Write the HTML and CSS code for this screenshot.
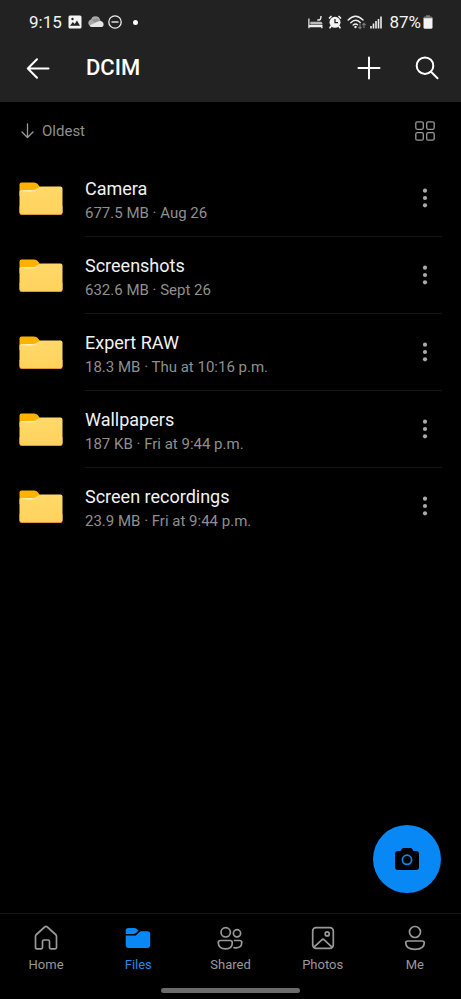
FILE: index.html
```html
<!DOCTYPE html>
<html lang="en">
<head>
<meta charset="utf-8">
<meta name="viewport" content="width=device-width, initial-scale=1">
<title>DCIM</title>
<link rel="stylesheet" href="styles.css">
</head>
<body>
<svg class="defs" aria-hidden="true">
  <defs>
    <linearGradient id="folder-front" x1="0" y1="0" x2="0" y2="1">
      <stop offset="0" stop-color="#ffd96a"/>
      <stop offset="1" stop-color="#ffd25c"/>
    </linearGradient>
    <linearGradient id="folder-shine" gradientUnits="userSpaceOnUse" x1="2" y1="0" x2="19" y2="0">
      <stop offset="0" stop-color="#ffe48c"/>
      <stop offset=".5" stop-color="#fff3bd"/>
      <stop offset="1" stop-color="#ffdf7c"/>
    </linearGradient>
  </defs>
  <symbol id="folder" viewBox="0 0 44 34">
    <path fill="#ffb300" d="M2.500 .5H15Q17.500 .5 18.700 2L21 5V14H.5V2.500Q.5 .5 2.500 .5Z"/>
    <path fill="#e0963a" d="M.5 24H43.500V31Q43.500 33 41.500 33H2.500Q.5 33 .5 31Z"/>
    <path fill="url(#folder-front)" d="M.5 9.500Q.5 8 2.500 8H14.500Q16.500 8 17.800 6.800L19.500 5.400Q20.500 4.600 22 4.600H41.500Q43.500 4.600 43.500 6.600V30Q43.500 32 41.500 32H2.500Q.5 32 .5 30Z"/>
    <path fill="none" stroke="url(#folder-shine)" stroke-width="1.600" stroke-linecap="round" d="M2.500 8.800H14.500Q17 8.800 18.500 7.300"/>
  </symbol>
  <symbol id="more" viewBox="0 0 24 24">
    <circle cx="12" cy="4.700" r="2.100"/><circle cx="12" cy="12" r="2.100"/><circle cx="12" cy="19.300" r="2.100"/>
  </symbol>
</svg>

<div class="app">
  <header class="header">
    <div class="status">
      <div class="status-group status-left">
        <span class="clock">9:15</span>
        <svg width="14" height="14" viewBox="0 0 14 14" aria-hidden="true"><path fill="#f4f4f4" fill-rule="evenodd" d="M2 .5H12Q13.500 .5 13.500 2V12Q13.500 13.500 12 13.500H2Q.5 13.500 .5 12V2Q.5 .5 2 .5ZM2 10.800H12L9 5.500L6.700 9L4.800 7ZM4.500 2.800A1.200 1.200 0 1 0 4.500 5.200A1.200 1.200 0 1 0 4.500 2.800Z"/></svg>
        <svg width="16" height="12" viewBox="0 0 16 12" aria-hidden="true"><path fill="#aaa" d="M1 9A3.400 3.400 0 0 1 3 3.600A4.700 4.700 0 0 1 12 3.500L13 6L4 11Z"/><path fill="#929292" d="M3.500 4L9 2.300L13 5.500L9 8Z"/><path fill="#e6e6e6" d="M1.500 9.500L9.800 5.600Q14 4 15.300 7Q16.500 11 12.500 11H4Q2.200 11 1.500 9.500Z"/></svg>
        <svg class="dnd" width="14" height="14" viewBox="0 0 14 14" aria-hidden="true"><circle cx="7" cy="7" r="6.200" fill="none" stroke="#eee" stroke-width="1.300"/><path stroke="#eee" stroke-width="1.400" d="M3.500 7H10.500"/></svg>
        <span class="dot"></span>
      </div>
      <div class="status-group status-right">
        <svg width="15" height="14" viewBox="0 0 15 14" aria-hidden="true"><path fill="#eee" d="M.3 3.500H1.500V10H14.500V13.300H13.200V12.200H1.500V13.300H.3Z"/><path fill="#bbb" d="M2.300 6.700H12.700Q14.300 6.700 14.300 8.300V9.500H2.300Z"/><path fill="none" stroke="#eee" stroke-width="1.400" d="M9.300 5H11Q13 5 13 1"/></svg>
        <svg width="14" height="14" viewBox="0 0 14 14" aria-hidden="true"><circle cx="7" cy="7.300" r="5.500" fill="#f4f4f4"/><path stroke="#f4f4f4" stroke-width="1.700" stroke-linecap="round" d="M1.500 3L3 1.500M12.500 3L11 1.500M2.800 11.500L2 12.700M11.200 11.500L12 12.700"/><path stroke="#222" stroke-width="1.300" fill="none" d="M7 4V7.700H10"/></svg>
        <svg class="wifi" width="20" height="15" viewBox="0 0 20 15" aria-hidden="true"><g fill="none" stroke="#eee" stroke-width="1.500" stroke-linecap="round"><path d="M1.200 5Q8.500-2.500 16 5M3.800 7.700Q8.500 3 13.200 7.500M6.200 10Q8.500 8 10.500 9.700"/></g><circle cx="8.500" cy="12" r="1.200" fill="#eee"/><path fill="none" stroke="#777" stroke-width="1.200" d="M13 8.500V13.500M11.300 12L13 13.700L14.500 12M17 13V8.500M15.400 10L17 8.300L18.600 10"/></svg>
        <svg width="12" height="13" viewBox="0 0 12 13" aria-hidden="true"><path stroke="#eee" stroke-width="1.600" d="M1 10V12.500M3.500 7.500V12.500M6 5V12.500M8.500 3V12.500M11 .5V12.500"/></svg>
        <span class="battery-text">87%</span>
        <svg width="10" height="14" viewBox="0 0 10 14" aria-hidden="true"><path fill="#777" d="M3 .3H7V1.500H8.500Q9.500 1.500 9.500 3V4H.5V3Q.5 1.500 1.500 1.500H3Z"/><path fill="#f3f3f3" d="M.5 3.300H9.500V12.200Q9.500 13.700 8 13.700H2Q.5 13.700 .5 12.200Z"/></svg>
      </div>
    </div>
    <div class="toolbar">
      <button class="icon-button" aria-label="Back"><svg width="24" height="24" viewBox="0 0 24 24"><path d="M22.500 12.500H1.800M11 3.200L1.800 12.500L11 21.700"/></svg></button>
      <h1 class="title">DCIM</h1>
      <button class="icon-button" aria-label="Add"><svg width="24" height="24" viewBox="0 0 24 24"><path d="M12 1.500V22.500M1.500 12H22.500"/></svg></button>
      <button class="icon-button" aria-label="Search"><svg width="24" height="24" viewBox="0 0 24 24"><circle cx="10" cy="9.700" r="8.300"/><path d="M16 15.700L22.500 22.200"/></svg></button>
    </div>
  </header>

  <main class="content">
    <div class="sort-row">
      <button class="sort"><svg width="14" height="16" viewBox="0 0 14 16" aria-hidden="true"><path d="M7.500 1V14.500M2 9L7.500 14.500L13 9"/></svg>Oldest</button>
      <button class="grid-toggle" aria-label="Grid view"><svg width="20" height="20" viewBox="0 0 20 20"><rect x=".8" y=".8" width="7.500" height="7.500" rx="1.500"/><rect x="11.700" y=".8" width="7.500" height="7.500" rx="1.500"/><rect x=".8" y="11.700" width="7.500" height="7.500" rx="1.500"/><rect x="11.700" y="11.700" width="7.500" height="7.500" rx="1.500"/></svg></button>
    </div>
    <ul class="files">
      <li class="file"><svg class="folder" aria-hidden="true"><use href="#folder"/></svg><div class="file-body"><div class="file-text"><div class="name">Camera</div><div class="meta">677.5 MB · Aug 26</div></div><button class="more" aria-label="More options for Camera"><svg width="24" height="24"><use href="#more"/></svg></button></div></li>
      <li class="file"><svg class="folder" aria-hidden="true"><use href="#folder"/></svg><div class="file-body"><div class="file-text"><div class="name">Screenshots</div><div class="meta">632.6 MB · Sept 26</div></div><button class="more" aria-label="More options for Screenshots"><svg width="24" height="24"><use href="#more"/></svg></button></div></li>
      <li class="file"><svg class="folder" aria-hidden="true"><use href="#folder"/></svg><div class="file-body"><div class="file-text"><div class="name">Expert RAW</div><div class="meta">18.3 MB · Thu at 10:16 p.m.</div></div><button class="more" aria-label="More options for Expert RAW"><svg width="24" height="24"><use href="#more"/></svg></button></div></li>
      <li class="file"><svg class="folder" aria-hidden="true"><use href="#folder"/></svg><div class="file-body"><div class="file-text"><div class="name">Wallpapers</div><div class="meta">187 KB · Fri at 9:44 p.m.</div></div><button class="more" aria-label="More options for Wallpapers"><svg width="24" height="24"><use href="#more"/></svg></button></div></li>
      <li class="file"><svg class="folder" aria-hidden="true"><use href="#folder"/></svg><div class="file-body"><div class="file-text"><div class="name">Screen recordings</div><div class="meta">23.9 MB · Fri at 9:44 p.m.</div></div><button class="more" aria-label="More options for Screen recordings"><svg width="24" height="24"><use href="#more"/></svg></button></div></li>
    </ul>
    <button class="fab" aria-label="Take a photo"><svg width="26" height="24" viewBox="0 0 26 24"><path fill="#000" d="M4 4H6.500L7.800 1.900Q8.400 1 9.500 1H16.500Q17.600 1 18.200 1.900L19.500 4H22Q25 4 25 7V20Q25 23 22 23H4Q1 23 1 20V7Q1 4 4 4Z"/><circle cx="13" cy="12.800" r="4.600" fill="none" stroke="#0788f5" stroke-width="1.700"/></svg></button>
  </main>

  <footer class="bottom">
    <nav class="tabs">
      <a class="tab" href="#home"><svg width="26" height="26" viewBox="0 0 26 26" aria-hidden="true"><path d="M2.500 11.500Q2.500 10.300 3.400 9.500L11.700 2Q13 .9 14.300 2L22.600 9.500Q23.500 10.300 23.500 11.500V22.500Q23.500 23.800 22.200 23.800H17.800Q16.500 23.800 16.500 22.500V16.500Q16.500 15 15 15H11Q9.500 15 9.500 16.500V22.500Q9.500 23.800 8.200 23.800H3.800Q2.500 23.800 2.500 22.500Z"/></svg>Home</a>
      <a class="tab active" href="#files" aria-current="page"><svg width="26" height="26" viewBox="0 0 26 26" aria-hidden="true"><path class="solid" d="M3.500 3H9.500Q10.700 3 11.600 3.800L13.500 5.600L11 8Q10 9 8.800 9H.7V5.800Q.7 3 3.500 3ZM.7 10.600H9Q10.800 10.600 12 9.400L14.300 7.200Q15.200 6.300 16.500 6.300H22.300Q25.200 6.300 25.200 9.200V20Q25.200 23 22.300 23H3.700Q.7 23 .7 20Z"/></svg>Files</a>
      <a class="tab" href="#shared"><svg width="26" height="26" viewBox="0 0 26 26" aria-hidden="true"><circle cx="8.700" cy="7.300" r="4.700"/><circle cx="20" cy="8.300" r="3.600"/><path d="M3.500 15.500H13Q15.300 15.500 15.300 17.700C15.300 22 12.500 23.800 8.500 23.800S1.300 22 1.300 17.700Q1.300 15.500 3.500 15.500ZM17.500 15.500H22.500Q24.800 15.500 24.800 17.500C24.800 21.500 22 23.500 17 22.700"/></svg>Shared</a>
      <a class="tab" href="#photos"><svg width="26" height="26" viewBox="0 0 26 26" aria-hidden="true"><rect x="2.700" y="2.700" width="20.600" height="20.600" rx="3.300"/><circle cx="17.200" cy="8.900" r="2"/><path d="M4 22.200L11.800 14.800Q13 13.700 14.200 14.800L22 22.200"/></svg>Photos</a>
      <a class="tab" href="#me"><svg width="26" height="26" viewBox="0 0 26 26" aria-hidden="true"><circle cx="13" cy="7" r="5.500"/><path d="M6 16H20Q22.300 16 22.300 17.800C22.300 22 18.500 24.300 13 24.300S3.700 22 3.700 17.800Q3.700 16 6 16Z"/></svg>Me</a>
    </nav>
    <div class="handle"></div>
  </footer>
</div>
</body>
</html>
```
FILE: styles.css
```css
* { box-sizing: border-box; }
body { margin: 0; background: #000; color: #f2f2f2; font-family: Roboto, "Liberation Sans", sans-serif; }
button { border: 0; padding: 0; background: none; color: inherit; font: inherit; display: flex; align-items: center; justify-content: center; cursor: pointer; }
svg { display: block; flex: none; }
.defs { position: absolute; width: 0; height: 0; }
.app { min-height: 100vh; display: flex; flex-direction: column; }

.header { background: #222; padding-bottom: 10px; }
.status { height: 44px; padding: 0 28px 0 29px; display: flex; align-items: center; justify-content: space-between; font-size: 17px; }
.status-group { display: flex; align-items: center; }
.status-left { gap: 6px; }
.status-left .dnd { margin-left: -2px; }
.status-right { gap: 5px; }
.wifi { margin-right: -2px; }
.battery-text { margin-right: -3px; padding-left: 2px; }
.dot { width: 5px; height: 5px; margin-left: 5px; border-radius: 50%; background: #fff; }
.toolbar { height: 48px; padding: 0 10px 0 14px; display: flex; align-items: center; gap: 10px; }
.icon-button { width: 48px; height: 48px; }
.icon-button svg { fill: none; stroke: #fff; stroke-width: 2; stroke-linecap: round; stroke-linejoin: round; }
.title { flex: 1; margin: 0; padding-left: 14px; font-size: 22px; line-height: 28px; font-weight: 500; color: #fff; }

.content { flex: 1; position: relative; }
.sort-row { height: 58px; padding: 0 26px 0 20px; display: flex; align-items: center; justify-content: space-between; }
.sort { gap: 8px; font-size: 15px; color: #8f8f8f; }
.sort svg, .grid-toggle svg { fill: none; stroke: #999; stroke-width: 1.3; stroke-linecap: round; stroke-linejoin: round; }

.files { list-style: none; margin: 0; padding: 0 19px; }
.file { display: flex; align-items: center; gap: 22px; }
.folder { width: 44px; height: 34px; }
.file-body { flex: 1; height: 77px; display: flex; align-items: center; border-bottom: 1px solid #161616; }
.file:last-child .file-body { border-bottom-color: transparent; }
.file-text { flex: 1; padding-top: 5px; }
.name { font-size: 18px; line-height: 24px; }
.meta { font-size: 15px; line-height: 24px; color: #8f8f8f; }
.more { width: 34px; height: 48px; fill: #aaa; }
.fab { position: absolute; right: 20px; bottom: 20px; width: 68px; height: 68px; border-radius: 50%; background: #0788f5; }

.bottom { border-top: 1px solid #161616; padding: 11px 0 6px; }
.tabs { display: grid; grid-template-columns: repeat(5, 1fr); }
.tab { display: flex; flex-direction: column; align-items: center; gap: 6px; font-size: 13px; line-height: 16px; color: #999; text-decoration: none; }
.tab svg { fill: none; stroke: #999; stroke-width: 1.7; stroke-linejoin: round; stroke-linecap: round; }
.tab .solid { fill: #0788f5; stroke: none; }
.active { color: #2488e8; }
.handle { width: 30%; height: 5px; margin: 15px auto 0; border-radius: 3px; background: #6b6b6b; }
```
